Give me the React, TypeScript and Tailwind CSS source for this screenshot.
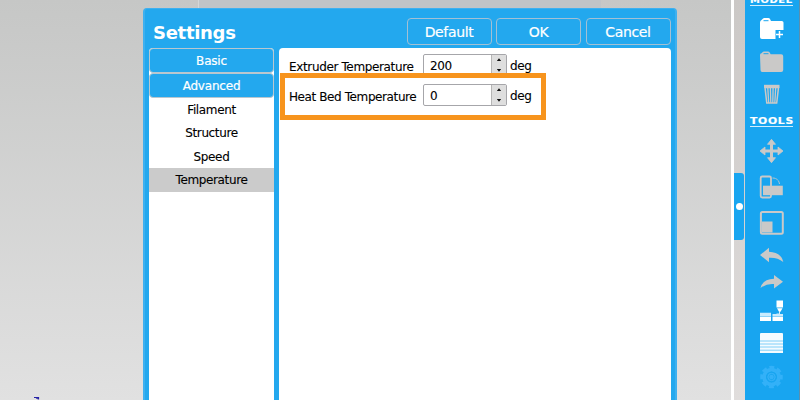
import type { ReactNode } from 'react';

const items = ['Filament', 'Structure', 'Speed', 'Temperature'];

function HeaderButton({ label }: { label: string }) {
  return (
    <button className="h-[27px] w-[85px] rounded-[4px] border border-[#a3c0d4] text-center text-[14px] leading-[24px] tracking-[-0.35px] text-white [-webkit-text-stroke:0.2px_white]">
      {label}
    </button>
  );
}

function GroupButton({ label }: { label: string }) {
  return (
    <button className="block h-[25px] w-full rounded-[4px] border border-[#b9c7cf] bg-[#23a8ee] text-center text-[12px] leading-[22px] tracking-[-0.2px] text-white [-webkit-text-stroke:0.2px_white]">
      {label}
    </button>
  );
}

function NumberRow({ label, value, tracking }: { label: string; value: string; tracking: string }) {
  return (
    <div className="flex h-[30px] items-start text-[12px] leading-[22px] text-black [-webkit-text-stroke:0.1px_black]">
      <span className={`w-[134px] whitespace-nowrap pt-[2px] ${tracking}`}>{label}</span>
      <div className="flex h-[22px] w-[84px] overflow-hidden rounded-[2px] border border-[#a6a6aa] bg-white">
        <span className="flex-1 pl-[6px] leading-[22px] tracking-[-0.4px]">{value}</span>
        <span className="flex w-[15px] items-center justify-center border-l border-[#b5b5b5] bg-[#dedede]">
          <svg width="14" height="20" viewBox="0 0 14 20">
            <path d="M4.800 6 7 3.200l2.200 2.800zM4.800 14 7 16.800l2.200-2.800z" fill="#111" />
          </svg>
        </span>
      </div>
      <span className="ml-[3px] pt-px tracking-[-0.4px]">deg</span>
    </div>
  );
}

function Tool({ y, h, children }: { y: number; h: number; children: ReactNode }) {
  return (
    <svg className="block shrink-0" width="55" height={h} viewBox={`745 ${y} 55 ${h}`}>
      {children}
    </svg>
  );
}

function Heading({ label, fit }: { label: string; fit: string }) {
  return (
    <div className="ml-[5px] h-[14px] w-[43px] shrink-0 border-b border-[#d3eefd]">
      <span
        className={`block w-[34px] origin-left text-[9.500px] font-bold leading-[15px] tracking-[0.6px] text-white [-webkit-text-stroke:0.2px_white] ${fit}`}
      >
        {label}
      </span>
    </div>
  );
}

function Sidebar() {
  return (
    <aside className="flex h-[400px] w-[55px] shrink-0 flex-col border-r border-[#5b8fae] bg-[#18a5f0]">
      <div className="-mt-[9px] h-[15px] shrink-0 pt-px">
        <Heading label="MODEL" fit="scale-x-[1.04]" />
      </div>
      <Tool y={6} h={40}>
        <path d="M760 22.500q0-2 1.500-2.500l1.300-1.300q.6-.7 1.500-.7h4q1 0 1.600.8l1.100 2.200h10.800q1.700 0 1.700 1.500V30h-8v9h-13.500q-2 0-2-2z" fill="#fff" />
        <path d="M763.500 20.700h5" stroke="#18a5f0" strokeWidth="1" />
        <path d="M779.500 31v7M776 34.500h7" stroke="#fff" strokeWidth="1.500" />
      </Tool>
      <Tool y={46} h={34}>
        <path d="M760 55q0-1.500 1.500-1.800l1-1q.5-.6 1.500-.6h4q1 0 1.500.7l1.200 2h10.500q2 0 2 2V70q0 2-2 2h-19q-1.700 0-1.700-2z" fill="#cac9c8" />
        <path d="M763.500 53.700h5" stroke="#18a5f0" strokeWidth="1" />
      </Tool>
      <Tool y={80} h={33}>
        <path d="M764 84.800h15.500v3h-15.500z" fill="#cac9c8" />
        <path d="M765 87.500h13.500l-1.800 15.600h-9.900z" fill="none" stroke="#cac9c8" strokeWidth="1.500" />
        <path d="m767.800 88 .9 15M770.400 88l.4 15M773.100 88l-.3 15M775.700 88l-.9 15" stroke="#cac9c8" strokeWidth="1.300" />
      </Tool>
      <Heading label="TOOLS" fit="scale-x-[1.14]" />
      <Tool y={127} h={43}>
        <path d="M771.500 143v16M763 151h17" stroke="#cac9c8" strokeWidth="3" />
        <path d="m771.500 139.300 4 5h-8zM771.500 162.700l4-5h-8zM760 151l5-4v8zM783 151l-5-4v8z" fill="#cac9c8" stroke="#cac9c8" strokeWidth=".8" strokeLinejoin="round" />
      </Tool>
      <Tool y={170} h={37}>
        <rect x="760.700" y="176.500" width="10.300" height="21" rx="1.500" fill="none" stroke="#cac9c8" strokeWidth="1.800" />
        <path d="M763 185.700h19.800v9.500h-19.800z" fill="#cac9c8" />
        <path d="M772.500 178q6 0 7 6" fill="none" stroke="#cac9c8" strokeWidth=".9" strokeDasharray="3 .6" />
      </Tool>
      <Tool y={207} h={35}>
        <rect x="760.900" y="211.900" width="21.900" height="21.900" rx="1.500" fill="none" stroke="#cac9c8" strokeWidth="2" />
        <path d="M762 221.500h10.500V232.500h-10.500z" fill="#cac9c8" />
      </Tool>
      <Tool y={242} h={26}>
        <path d="m760 255 9-7.200v4q12.500.8 14.300 10.200-5.800-4.700-14.300-4.200v4.500z" fill="#cac9c8" />
      </Tool>
      <Tool y={268} h={27}>
        <path d="m783 281.700-9-6.800v3.800q-11.500.4-13.500 9.300 5.800-4.700 13.500-4v4.500z" fill="#cac9c8" />
      </Tool>
      <Tool y={295} h={33}>
        <path d="M776.500 300.500h6.500v7h-6.500zM777 308.300h5.500l-2 3.500h-1.500z" fill="#fff" />
        <path d="M779.500 311.500v2.500h-3" fill="none" stroke="#fff" strokeWidth=".8" />
        <path d="M760 316.500h11v4.500h-11zM772.500 316.500h10.500v4.500h-10.500z" fill="#fff" />
        <path d="M760 312.800h11v3.200h-11zM772.500 314h10.500v2h-10.500z" fill="#c9ebfd" />
      </Tool>
      <Tool y={328} h={33}>
        <path d="M761 333h21q1 0 1 1v19h-23v-19q0-1 1-1z" fill="#f4fbff" />
        <path d="M760 341h23M760 344h23M760 347h23M760 350.200h23" stroke="#73c9f7" strokeWidth=".9" />
      </Tool>
      <Tool y={361} h={39}>
        <g fill="none" stroke="#33b1f8">
          <circle cx="771.500" cy="377" r="7.400" strokeWidth="3.800" />
          <circle cx="771.500" cy="377" r="9.700" strokeWidth="3.200" strokeDasharray="4.800 2.818" strokeDashoffset="2.400" />
          <circle cx="771.500" cy="377" r="4" strokeWidth="1" />
        </g>
        <circle cx="771.500" cy="377" r="2.300" fill="#33b1f8" />
        <circle cx="771.500" cy="377" r="4.700" fill="none" stroke="#18a5f0" strokeWidth="1" />
        <circle cx="771.500" cy="377" r="3.500" fill="none" stroke="#33b1f8" strokeWidth="1" />
      </Tool>
    </aside>
  );
}

export default function App() {
  return (
    <div className="flex h-[400px] w-[800px] overflow-hidden bg-[#e0e0e0] font-['DejaVu_Sans',Verdana,sans-serif]">
      <main className="relative h-[400px] w-[731px] shrink-0 bg-gradient-to-b from-[#c6c7c6] to-[#e1e1e1]">
        <div className="absolute left-[198px] top-0 h-[8px] w-[403px] border-l border-[#d4d6d7] bg-[#c0c4c7]" />
        <svg className="absolute left-[32px] top-[396px]" width="10" height="4" viewBox="0 0 10 4">
          <path d="M2 1.500h4.500v1.500q-1.500 0-2.500-1.500" fill="none" stroke="#2622a6" strokeWidth="1.200" />
        </svg>
        <section className="relative ml-[143px] mt-[8px] flex h-[392px] w-[534px] flex-col rounded-t-[4px] border-x-2 border-t border-[#3eb0ef] bg-[#23a8ee] px-[4px]">
          <header className="flex h-[39px] shrink-0 items-start pl-[4px]">
            <h1 className="mt-[12px] flex-1 text-[18px] font-bold leading-[24px] tracking-[-0.3px] text-white">Settings</h1>
            <div className="mr-[0.500px] mt-[9px] flex gap-[4.500px]">
              <HeaderButton label="Default" />
              <HeaderButton label="OK" />
              <HeaderButton label="Cancel" />
            </div>
          </header>
          <div className="flex min-h-0 flex-1 gap-[5px]">
            <nav className="w-[125px] shrink-0 rounded-t-[4px] bg-white">
              <GroupButton label="Basic" />
              <GroupButton label="Advanced" />
              {items.map((item) => (
                <div
                  key={item}
                  className={`h-[23.400px] text-center text-[12px] leading-[24px] tracking-[-0.36px] text-black [-webkit-text-stroke:0.1px_black] ${item === 'Temperature' ? 'bg-[#cbcbcb]' : ''}`}
                >
                  {item}
                </div>
              ))}
            </nav>
            <div className="relative flex-1 rounded-t-[4px] bg-white pl-[10px] pt-[6px]">
              <NumberRow label="Extruder Temperature" value="200" tracking="tracking-[-0.36px]" />
              <NumberRow label="Heat Bed Temperature" value="0" tracking="tracking-[-0.4px]" />
              <div className="absolute left-[1px] top-[25px] h-[47px] w-[266px] border-[5px] border-[#f7941d]" />
            </div>
          </div>
        </section>
      </main>
      <div className="w-[3px] shrink-0 bg-white" />
      <div className="flex w-[11px] shrink-0 items-start bg-gradient-to-b from-[#cbc8c6] to-[#e0dddc] pt-[173px]">
        <div className="flex h-[67px] w-[10px] items-center justify-center rounded-r-[3px] bg-[#18a5f0]">
          <span className="h-[7px] w-[7px] rounded-full bg-white" />
        </div>
      </div>
      <Sidebar />
    </div>
  );
}
